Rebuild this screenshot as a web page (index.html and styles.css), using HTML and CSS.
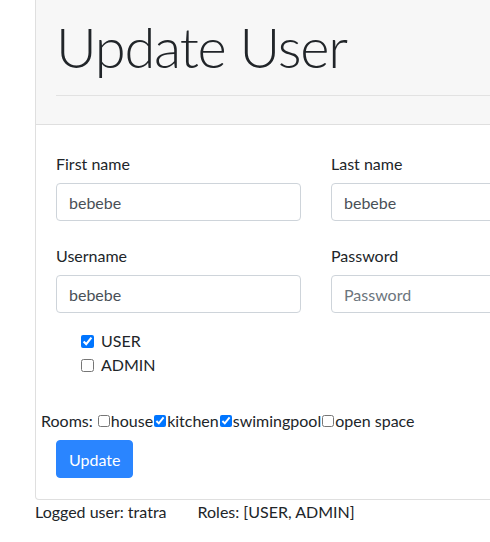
FILE: index.html
```html
<!DOCTYPE html>
<html lang="en">
<head>
<meta charset="utf-8">
<title>Update User</title>
<link rel="stylesheet" href="styles.css">
</head>
<body>
<div class="page">
  <div class="card">
    <div class="card-header">
      <h1 class="title">Update User</h1>
      <hr class="divider">
    </div>
    <form class="card-body">
      <div class="form-row row-names">
        <div class="form-group">
          <label class="label" for="first">First name</label>
          <input class="input" id="first" type="text" value="bebebe">
        </div>
        <div class="form-group">
          <label class="label" for="last">Last name</label>
          <input class="input" id="last" type="text" value="bebebe">
        </div>
      </div>
      <div class="form-row row-account">
        <div class="form-group">
          <label class="label" for="username">Username</label>
          <input class="input" id="username" type="text" value="bebebe">
        </div>
        <div class="form-group">
          <label class="label" for="password">Password</label>
          <input class="input" id="password" type="password" placeholder="Password">
        </div>
      </div>
      <div class="roles">
        <label class="form-check"><input class="check" type="checkbox" checked><span>USER</span></label>
        <label class="form-check"><input class="check" type="checkbox"><span>ADMIN</span></label>
      </div>
      <div class="rooms">Rooms: <input class="room-check" type="checkbox">house<input class="room-check" type="checkbox" checked>kitchen<input class="room-check" type="checkbox" checked>swimingpool<input class="room-check" type="checkbox">open space</div>
      <button class="btn" type="button">Update</button>
    </form>
  </div>
  <div class="status">
    <span>Logged user: tratra</span>
    <span class="roles-info">Roles: [USER, ADMIN]</span>
  </div>
</div>
</body>
</html>
```
FILE: styles.css
```css
html, body {
  margin: 0;
  overflow: hidden;
}
body {
  font-family: "Lato", "Liberation Sans", sans-serif;
  font-size: 16px;
  line-height: 24px;
  color: #212529;
  background: #fff;
}
.page {
  padding-left: 35px;
  width: 600px;
}
.card {
  width: 562px;
  box-sizing: border-box;
  border: 1px solid #dfdfdf;
  border-top: 0;
  border-radius: 0 0 4px 4px;
}
.card-header {
  background: #f7f7f7;
  padding: 12px 20px;
  border-bottom: 1px solid #dfdfdf;
}
.title {
  margin: 0;
  font-size: 56px;
  font-weight: 300;
  line-height: 70px;
  letter-spacing: -1.2px;
}
.divider {
  margin: 13px 0 16px;
  border: 0;
  border-top: 1px solid #e2e2e2;
  height: 0;
}
.card-body {
  display: block;
  padding: 27px 20px 21px;
}
.form-row {
  display: grid;
  grid-template-columns: 245px 245px;
  column-gap: 30px;
}
.row-names { margin-bottom: 23px; }
.row-account { margin-bottom: 16px; }
.label {
  display: block;
  margin-bottom: 7px;
}
.input {
  display: block;
  box-sizing: border-box;
  width: 100%;
  height: 38px;
  margin: 0;
  padding: 6px 12px;
  border: 1px solid #ced4da;
  border-radius: 4px;
  font-family: inherit;
  font-size: 16px;
  color: #495057;
  background: #fff;
}
.input::placeholder { color: #6c757d; }
.roles {
  padding-left: 25px;
  margin-bottom: 32px;
}
.form-check {
  display: flex;
  align-items: flex-start;
}
.check {
  width: 13px;
  height: 13px;
  margin: 6px 7px 0 0;
}
.rooms {
  margin-left: -15px;
}
.room-check {
  width: 12px;
  height: 12px;
  margin: 0 1px 0 1px;
  vertical-align: baseline;
}
.btn {
  display: block;
  margin-top: 7px;
  height: 38px;
  padding: 0 12px;
  border: 1px solid #2a85ff;
  border-radius: 4px;
  background: #2a85ff;
  color: #fff;
  font-family: inherit;
  font-size: 16px;
}
.status {
  display: flex;
}
.roles-info {
  margin-left: 31px;
}
```
